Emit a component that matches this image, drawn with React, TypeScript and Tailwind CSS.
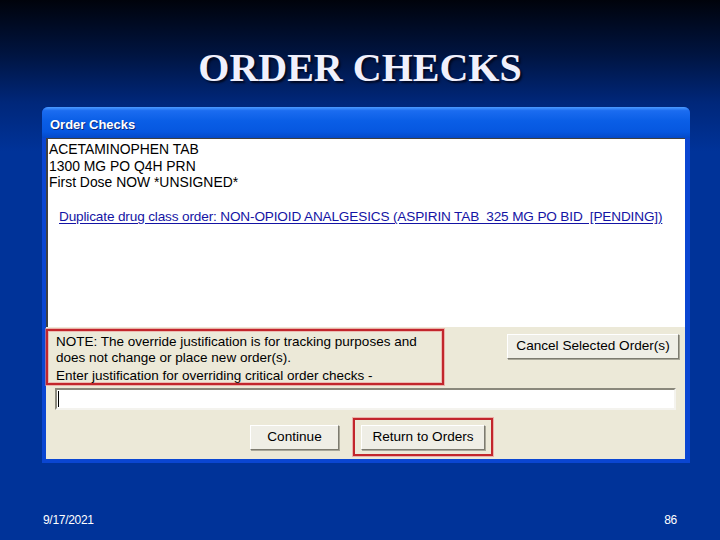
import React from 'react';

const sans = { fontFamily: '"Liberation Sans", Arial, sans-serif' };

const XpButton: React.FC<{ label: string; className?: string }> = ({ label, className = '' }) => (
  <div
    className={`flex items-center justify-center bg-[#efeee6] border border-t-[#ffffff] border-l-[#ffffff] border-b-[#7d7b70] border-r-[#7d7b70] shadow-[1px_1px_0_#a9a799] text-[13.6px] text-black ${className}`}
  >
    {label}
  </div>
);

const App: React.FC = () => {
  return (
    <div
      className="w-[720px] h-[540px] flex flex-col overflow-hidden bg-[linear-gradient(180deg,#00030b_0%,#001440_10%,#00277a_19%,#003399_28%,#003399_100%)]"
      style={sans}
    >
      {/* スライドタイトル */}
      <h1
        className="pt-[44px] text-center text-[40px] leading-[48px] font-bold text-[#f0f0fc] [text-shadow:2px_2px_2px_#000820]"
        style={{ fontFamily: '"Liberation Serif", "Times New Roman", serif' }}
      >
        ORDER CHECKS
      </h1>

      {/* ダイアログ */}
      <div className="mt-[15px] ml-[42px] w-[648px] h-[356px] flex flex-col rounded-t-[6px] bg-[#0843cc] border-l-4 border-r-[5px] border-b-4 border-[#0a46d2] border-t-0">
        <div className="h-[31px] -ml-[4px] -mr-[5px] pl-[8px] pt-[5px] flex items-center rounded-t-[6px] bg-[linear-gradient(180deg,#4d9cff_0%,#1b6cf0_12%,#0a5ee6_45%,#0657e0_80%,#0449c8_100%)]">
          <span className="text-[13px] font-bold text-white [text-shadow:1px_1px_0_#0a2a80]">Order Checks</span>
        </div>

        <div className="h-[189px] bg-white border-t border-l-2 border-[#404040] pt-[2px] text-[13.9px] leading-[16.5px] text-black">
          <div className="pl-[1px]">ACETAMINOPHEN TAB</div>
          <div className="pl-[1px]">1300 MG PO Q4H PRN</div>
          <div className="pl-[1px]">First Dose NOW *UNSIGNED*</div>
          <div className="mt-[18.5px] pl-[11px] text-[13.6px] tracking-[-0.15px] whitespace-nowrap text-[#1414a4] underline underline-offset-2">
            Duplicate drug class order: NON-OPIOID ANALGESICS (ASPIRIN TAB&nbsp; 325 MG PO BID&nbsp; [PENDING])
          </div>
        </div>

        <div className="flex-1 bg-[#ece9d8] flex flex-col text-[13.5px] text-black">
          <div className="mt-[2px] flex items-start justify-between">
            <div className="w-[398px] h-[56px] border-2 border-[#c2262c] shadow-[0_0_0_1px_rgba(235,140,140,0.6),inset_0_0_0_1px_rgba(235,140,140,0.5)] pl-[8px] pt-[3px] leading-[16px]">
              <div>NOTE: The override justification is for tracking purposes and</div>
              <div>does not change or place new order(s).</div>
              <div className="mt-[2px]">Enter justification for overriding critical order checks -</div>
            </div>
            <XpButton label="Cancel Selected Order(s)" className="mt-[5px] mr-[6px] w-[172px] h-[25px]" />
          </div>

          <div className="mt-[3px] ml-[9px] w-[621px] h-[22px] bg-white border-2 border-t-[#8a887c] border-l-[#8a887c] border-b-[#f4f3ee] border-r-[#f4f3ee] flex items-center pl-[1px]">
            <div className="w-[1px] h-[16px] bg-black" />
          </div>

          <div className="mt-[8px] flex items-center">
            <XpButton label="Continue" className="ml-[204px] w-[89px] h-[25px]" />
            <div className="ml-[14px] w-[140px] h-[38px] border-2 border-[#c2262c] shadow-[0_0_0_1px_rgba(235,140,140,0.6)] flex items-center pl-[6px]">
              <XpButton label="Return to Orders" className="w-[124px] h-[25px]" />
            </div>
          </div>
        </div>
      </div>

      {/* フッター */}
      <div className="mt-[48px] mx-[43px] flex justify-between text-[12px] text-white tracking-[-0.3px]">
        <span>9/17/2021</span>
        <span>86</span>
      </div>
    </div>
  );
};

export default App;
